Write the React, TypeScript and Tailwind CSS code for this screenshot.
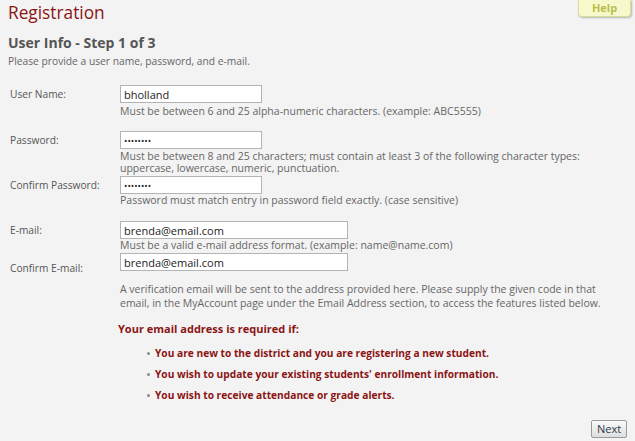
import React from "react";

const font = { fontFamily: '"Open Sans", "DejaVu Sans", sans-serif' };

function Row({ label, children, labelTop }: { label: string; children: React.ReactNode; labelTop?: string }) {
  return (
    <div className="flex">
      <div className={`w-[110px] shrink-0 text-[10.2px] leading-[18px] text-[#555] ${labelTop ?? ""}`}>{label}</div>
      <div className="flex flex-col">{children}</div>
    </div>
  );
}

function Input({ value, w, type = "text" }: { value: string; w: string; type?: string }) {
  return (
    <input
      readOnly
      type={type}
      value={value}
      className={`${w} h-[18px] border border-[#b4b4b4] bg-white px-[3px] ${type === "password" ? "text-[9px]" : "text-[11px]"} text-[#222] outline-none`}
      style={font}
    />
  );
}

const bullets = [
  "You are new to the district and you are registering a new student.",
  "You wish to update your existing students' enrollment information.",
  "You wish to receive attendance or grade alerts.",
];

export default function App() {
  return (
    <div className="relative h-[441px] w-[635px] overflow-hidden bg-[#f3f3f3]" style={font}>
      <div className="absolute right-[4px] top-0 flex h-[17px] w-[53px] items-center justify-center rounded-b-[4px] border border-t-0 border-[#d9dd96] bg-[#f7f9cc] text-[11px] font-bold text-[#b7bf4c] shadow-[1px_1px_2px_rgba(0,0,0,0.25)]">
        Help
      </div>
      <div className="pl-[8px] pt-[1px]">
        <div className="text-[17.3px] leading-[24px] text-[#8b1414]">Registration</div>
        <div className="mt-[9px] text-[14px] font-bold leading-[18px] text-[#555]">User Info - Step 1 of 3</div>
        <div className="mt-[2px] text-[10.25px] leading-[14px] text-[#666]">Please provide a user name, password, and e-mail.</div>
      </div>
      <div className="mt-[17px] flex flex-col pl-[10px] text-[10.5px] text-[#666]">
        <Row label="User Name:">
          <Input value="bholland" w="w-[142px]" />
          <div className="mt-[1px] leading-[14px]">Must be between 6 and 25 alpha-numeric characters. (example: ABC5555)</div>
        </Row>
        <div className="mt-[13px]">
          <Row label="Password:">
            <Input value="12345678" type="password" w="w-[142px]" />
            <div className="mt-[1px] flex flex-col">
              <div className="h-[12px] leading-[12px]">
                Must be between 8 and 25 characters; must contain at least 3 of the following character types:
              </div>
              <div className="h-[12px] leading-[12px]">uppercase, lowercase, numeric, punctuation.</div>
            </div>
          </Row>
        </div>
        <div className="mt-[2px]">
          <Row label="Confirm Password:">
            <Input value="12345678" type="password" w="w-[142px]" />
            <div className="leading-[13px]">Password must match entry in password field exactly. (case sensitive)</div>
          </Row>
        </div>
        <div className="mt-[14px]">
          <Row label="E-mail:">
            <Input value="brenda@email.com" w="w-[228px]" />
            <div className="leading-[13px]">Must be a valid e-mail address format. (example: name@name.com)</div>
          </Row>
        </div>
        <div className="mt-[1px]">
          <Row label="Confirm E-mail:" labelTop="pt-[6px]">
            <Input value="brenda@email.com" w="w-[228px]" />
          </Row>
        </div>
        <div className="ml-[110px] mt-[5px] leading-[14px]">
          A verification email will be sent to the address provided here. Please supply the given code in that
          <br />
          email, in the MyAccount page under the Email Address section, to access the features listed below.
        </div>
        <div className="ml-[108px] mt-[12px] text-[11px] font-bold leading-[14px] text-[#8b1414]">
          Your email address is required if:
        </div>
        <ul className="ml-[137px] mt-[10px] flex flex-col gap-[7px] text-[10.2px] font-bold leading-[14px] text-[#8b1414]">
          {bullets.map((b) => (
            <li key={b} className="flex items-center gap-[5px]">
              <span className="h-[3px] w-[3px] shrink-0 rounded-full bg-[#8a8a8a]" />
              <span>{b}</span>
            </li>
          ))}
        </ul>
      </div>
      <button className="absolute bottom-[3px] right-[8px] h-[18px] w-[36px] rounded-[2px] border border-[#9a9a9a] bg-gradient-to-b from-[#fafafa] to-[#dedede] text-[11px] leading-[16px] text-[#2a3a4a]">
        Next
      </button>
    </div>
  );
}
